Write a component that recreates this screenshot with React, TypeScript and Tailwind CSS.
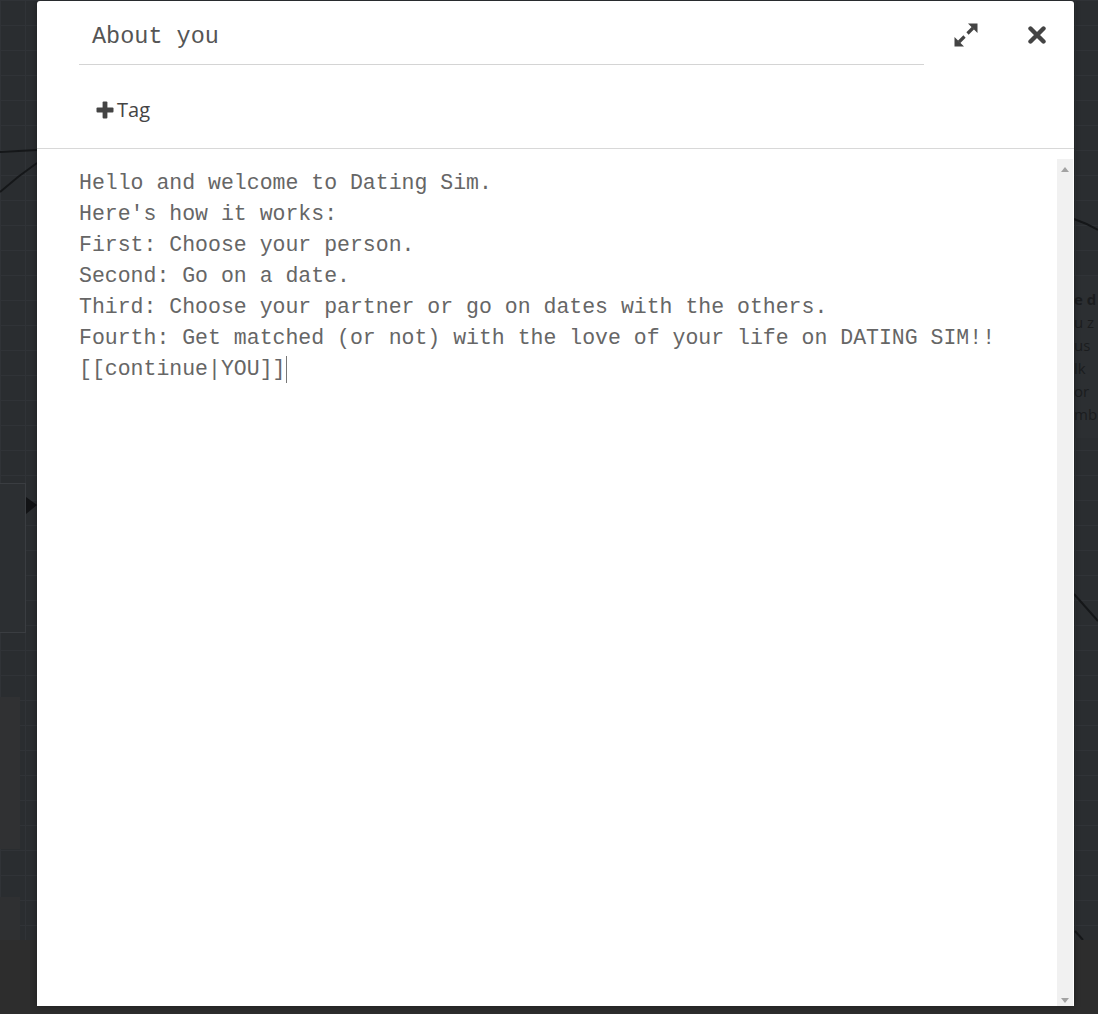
import React from 'react';

const lines = [
  'Hello and welcome to Dating Sim.',
  "Here's how it works:",
  'First: Choose your person.',
  'Second: Go on a date.',
  'Third: Choose your partner or go on dates with the others.',
  'Fourth: Get matched (or not) with the love of your life on DATING SIM!!',
];

function ExpandIcon() {
  return (
    <svg width="24" height="24" viewBox="0 0 24 24" fill="#444">
      <polygon points="23.5,0.5 23.5,10 14,0.5" />
      <line x1="19" y1="5" x2="13.5" y2="10.5" stroke="#444" strokeWidth="3.2" />
      <polygon points="0.5,23.5 0.5,14 10,23.5" />
      <line x1="5" y1="19" x2="10.5" y2="13.5" stroke="#444" strokeWidth="3.2" />
    </svg>
  );
}

function CloseIcon() {
  return (
    <svg width="18" height="18" viewBox="0 0 18 18">
      <path d="M2.5 2.5 L15.5 15.5 M15.5 2.5 L2.5 15.5" stroke="#444" strokeWidth="4.4" strokeLinecap="round" />
    </svg>
  );
}

function PlusIcon() {
  return (
    <svg width="18" height="18" viewBox="0 0 18 18" fill="#444">
      <rect x="6.6" y="0.5" width="4.8" height="17" rx="1" />
      <rect x="0.5" y="6.6" width="17" height="4.8" rx="1" />
    </svg>
  );
}

// story map behind the dialog
function StoryMap() {
  return (
    <div className="relative h-[940px] bg-[#2a2d30] bg-[linear-gradient(to_right,#303337_1px,transparent_1px),linear-gradient(to_bottom,#303337_1px,transparent_1px)] bg-[size:25px_25px]">
      <div className="absolute left-[-120px] top-[483px] h-[150px] w-[146px] border border-[#3a3d41] bg-[#2c2f32]" />
      <div className="absolute left-[-60px] top-[697px] h-[152px] w-[80px] bg-[#303133]" />
      <div className="absolute left-[-60px] top-[897px] h-[43px] w-[80px] bg-[#2f3032]" />

      <div className="absolute left-[1060px] top-[276px] w-[38px] bg-[#2c2f32] py-[12px] pl-[14px] font-['Open_Sans',sans-serif] text-[15px] leading-[23px] text-[#1b1d1f]">
        <div className="font-bold">e d</div>
        <div>u z</div>
        <div>us</div>
        <div>lk</div>
        <div>or</div>
        <div>mb</div>
      </div>

      <svg className="absolute inset-0" width="1098" height="940">
        <path d="M0 152 L37 150" stroke="#151719" strokeWidth="2" fill="none" />
        <path d="M0 192 Q18 176 37 163" stroke="#151719" strokeWidth="2" fill="none" />
        <path d="M1074 219 Q1086 223 1098 230" stroke="#151719" strokeWidth="2" fill="none" />
        <path d="M1074 594 L1098 621" stroke="#151719" strokeWidth="2" fill="none" />
        <path d="M1075 931 L1083 940" stroke="#151719" strokeWidth="2" fill="none" />
        <polygon points="26,497 37,505 26,514" fill="#121315" />
      </svg>
    </div>
  );
}

export default function App() {
  return (
    <div className="relative h-[1014px] w-[1098px] overflow-hidden bg-[#2d2d2d]">
      <StoryMap />
      <div className="h-[74px] bg-[#2d2d2d]" />

      {/* Passage editor dialog */}
      <div className="absolute left-[37px] top-[1px] flex h-[1005px] w-[1037px] flex-col rounded-t-[3px] bg-white shadow-[0_0_6px_rgba(0,0,0,0.35)]">
        <div className="flex h-[64px] items-center pt-[4px]">
          <div className="ml-[42px] flex h-full w-[845px] items-center border-b border-[#d4d4d4] pl-[13px] pt-[4px] font-['Liberation_Mono',monospace] text-[23.5px] text-[#555]">
            About you
          </div>
          <div className="ml-[30px] flex h-[24px] w-[24px] items-center justify-center">
            <ExpandIcon />
          </div>
          <div className="ml-[50px] flex h-[24px] w-[18px] items-center justify-center">
            <CloseIcon />
          </div>
        </div>

        <div className="h-[84px] border-b border-[#d8d8d8] pl-[59px] pt-[31px]">
          <div className="flex items-center gap-[3px] font-['Open_Sans',sans-serif] text-[20px] leading-[28px] text-[#444]">
            <PlusIcon />
            <span>Tag</span>
          </div>
        </div>

        <div className="flex min-h-0 flex-1">
          <div className="flex-1 pl-[42px] pt-[19px] font-['Liberation_Mono',monospace] text-[21.5px] leading-[31px] text-[#666]">
            {lines.map((line) => (
              <div key={line} className="whitespace-pre">{line}</div>
            ))}
            <div className="flex items-center whitespace-pre">
              [[continue|YOU]]
              <span className="ml-[1px] inline-block h-[27px] w-px bg-[#777]" />
            </div>
          </div>
          <div className="mr-[1px] mt-[10px] flex w-[16px] flex-col items-center justify-between bg-[#f1f1f1] pb-[3px] pt-[8px]">
            <div className="h-0 w-0 border-x-[4px] border-b-[5px] border-x-transparent border-b-[#a3a3a3]" />
            <div className="h-0 w-0 border-x-[4px] border-t-[5px] border-x-transparent border-t-[#a3a3a3]" />
          </div>
        </div>
      </div>
    </div>
  );
}
